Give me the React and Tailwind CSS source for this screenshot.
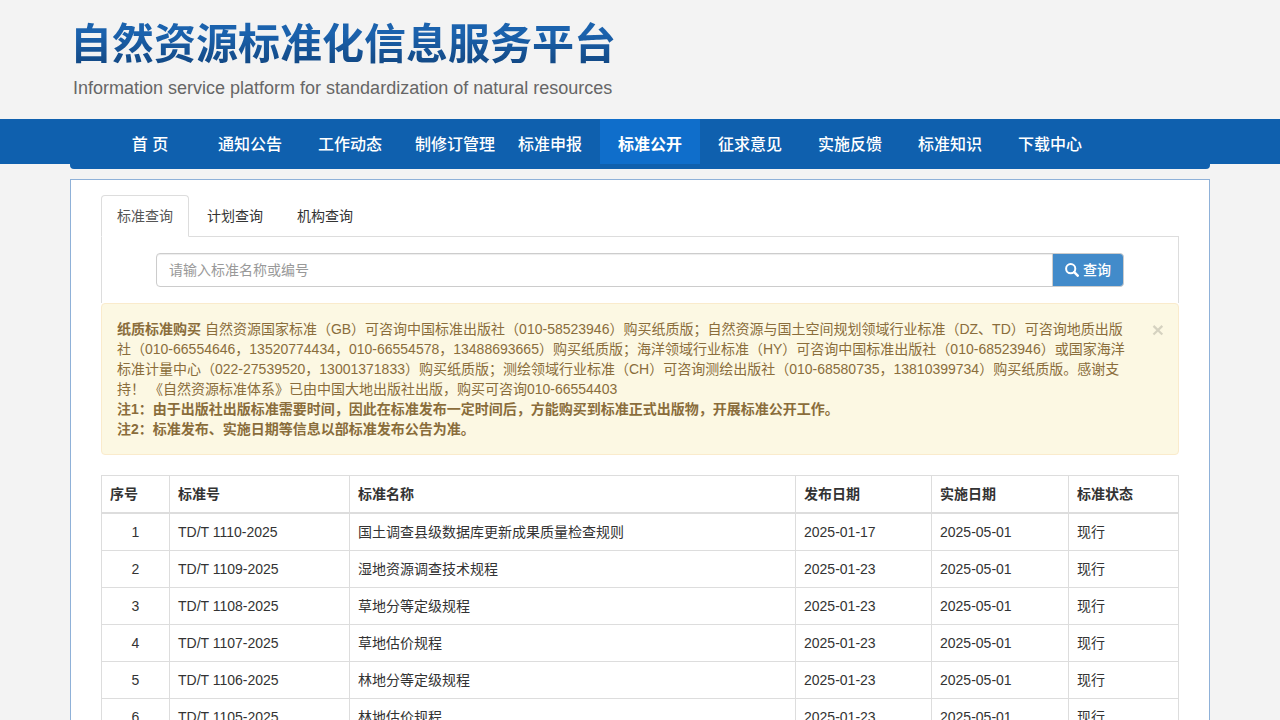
import React, { useState } from 'react';
import clsx from 'clsx';

const navItems = [
  '首 页',
  '通知公告',
  '工作动态',
  '制修订管理',
  '标准申报',
  '标准公开',
  '征求意见',
  '实施反馈',
  '标准知识',
  '下载中心',
];

const tabs = ['标准查询', '计划查询', '机构查询'];

const standards = [
  { code: 'TD/T 1110-2025', name: '国土调查县级数据库更新成果质量检查规则', published: '2025-01-17', effective: '2025-05-01', status: '现行' },
  { code: 'TD/T 1109-2025', name: '湿地资源调查技术规程', published: '2025-01-23', effective: '2025-05-01', status: '现行' },
  { code: 'TD/T 1108-2025', name: '草地分等定级规程', published: '2025-01-23', effective: '2025-05-01', status: '现行' },
  { code: 'TD/T 1107-2025', name: '草地估价规程', published: '2025-01-23', effective: '2025-05-01', status: '现行' },
  { code: 'TD/T 1106-2025', name: '林地分等定级规程', published: '2025-01-23', effective: '2025-05-01', status: '现行' },
  { code: 'TD/T 1105-2025', name: '林地估价规程', published: '2025-01-23', effective: '2025-05-01', status: '现行' },
];

const SearchIcon = () => (
  <svg className="h-3.5 w-3.5" viewBox="0 0 14 14" fill="none" stroke="currentColor" aria-hidden="true">
    <circle cx="5.7" cy="5.7" r="4.6" strokeWidth="2" />
    <path d="M9.2 9.2l3.5 3.5" strokeWidth="2.5" strokeLinecap="round" />
  </svg>
);

const Header = () => (
  <header className="mx-auto h-[119px] max-w-[1140px] pt-4">
    <h1 className="w-fit bg-gradient-to-b from-[#1b62ad] from-30% to-[#134a87] to-80% bg-clip-text text-[42px] leading-[58px] font-bold text-transparent">
      自然资源标准化信息服务平台
    </h1>
    <p className="pl-[3px] text-lg leading-7 text-[#666666]">
      Information service platform for standardization of natural resources
    </p>
  </header>
);

const Nav = () => (
  <nav className="h-[45px] bg-[#0f60ae]">
    <ul className="mx-auto flex h-[50px] max-w-[1140px] rounded-b bg-[#0f60ae] px-[30px]">
      {navItems.map((item) => (
        <li key={item} className="w-[100px]">
          <a
            href="#"
            className={clsx(
              'block h-[45px] px-[15px] text-center text-base leading-[52px] whitespace-nowrap text-white',
              item === '标准公开' ? 'bg-[#0f6ecb] font-bold' : 'font-medium'
            )}
          >
            {item}
          </a>
        </li>
      ))}
    </ul>
  </nav>
);

const Notice = ({ onClose }) => (
  <div className="rounded border border-[#faebcc] bg-[#fcf8e3] p-[15px] pr-[35px] text-[#8a6d3b]">
    {/* floats past the first line, so the first two lines wrap short of it */}
    <button
      type="button"
      aria-label="关闭"
      onClick={onClose}
      className="relative -right-[21px] float-right text-[21px] leading-[21px] font-bold text-black opacity-15"
    >
      ×
    </button>
    <p>
      <strong>纸质标准购买</strong>{' '}
      自然资源国家标准（GB）可咨询中国标准出版社（010-58523946）购买纸质版；自然资源与国土空间规划领域行业标准（DZ、TD）可咨询地质出版社（010-66554646，13520774434，010-66554578，13488693665）购买纸质版；海洋领域行业标准（HY）可咨询中国标准出版社（010-68523946）或国家海洋标准计量中心（022-27539520，13001371833）购买纸质版；测绘领域行业标准（CH）可咨询测绘出版社（010-68580735，13810399734）购买纸质版。感谢支持！ 《自然资源标准体系》已由中国大地出版社出版，购买可咨询010-66554403
    </p>
    <p className="font-bold">注1：由于出版社出版标准需要时间，因此在标准发布一定时间后，方能购买到标准正式出版物，开展标准公开工作。</p>
    <p className="font-bold">注2：标准发布、实施日期等信息以部标准发布公告为准。</p>
  </div>
);

const App = () => {
  const [activeTab, setActiveTab] = useState('标准查询');
  const [keyword, setKeyword] = useState('');
  const [showNotice, setShowNotice] = useState(true);

  return (
    <div
      lang="zh-CN"
      className="min-h-screen bg-[#f3f3f3] font-['Liberation_Sans','Noto_Sans_CJK_SC',sans-serif] text-sm leading-5 text-[#333333]"
    >
      <Header />
      <Nav />

      <main className="mx-auto mt-[15px] max-w-[1140px] border border-[#8fb1d8] bg-white px-[30px] pt-[15px] pb-5">
        <div className="flex gap-0.5 border-b border-[#dddddd]" role="tablist">
          {tabs.map((tab) => (
            <button
              key={tab}
              type="button"
              role="tab"
              aria-selected={activeTab === tab}
              onClick={() => setActiveTab(tab)}
              className={clsx(
                '-mb-px rounded-t border px-[15px] py-2.5',
                activeTab === tab ? 'border-[#dddddd] border-b-white bg-white text-[#555555]' : 'border-transparent'
              )}
            >
              {tab}
            </button>
          ))}
        </div>

        <form
          className="flex border-x border-[#dddddd] px-[54px] py-4"
          onSubmit={(e) => e.preventDefault()}
        >
          <input
            type="text"
            aria-label="标准名称或编号"
            value={keyword}
            onChange={(e) => setKeyword(e.target.value)}
            placeholder="请输入标准名称或编号"
            className="h-[34px] min-w-0 flex-1 rounded-l border border-[#cccccc] px-3 shadow-[inset_0_1px_1px_rgba(0,0,0,0.075)] placeholder:text-[#999999]"
          />
          <button
            type="submit"
            className="-ml-px flex h-[34px] items-center gap-1 rounded-r border border-[#cccccc] bg-[#428bca] px-3 font-medium text-white"
          >
            <SearchIcon />
            查询
          </button>
        </form>

        {showNotice && <Notice onClose={() => setShowNotice(false)} />}

        <table className="mt-5 w-full table-fixed border-collapse">
          <thead>
            <tr className="text-left [&>th]:border [&>th]:border-b-2 [&>th]:border-[#dddddd] [&>th]:p-2">
              <th className="w-[68px]">序号</th>
              <th className="w-[180px]">标准号</th>
              <th>标准名称</th>
              <th className="w-[136px]">发布日期</th>
              <th className="w-[137px]">实施日期</th>
              <th className="w-[110px]">标准状态</th>
            </tr>
          </thead>
          <tbody>
            {standards.map((row, i) => (
              <tr key={row.code} className="[&>td]:border [&>td]:border-[#dddddd] [&>td]:p-2">
                <td className="text-center">{i + 1}</td>
                <td>{row.code}</td>
                <td>{row.name}</td>
                <td>{row.published}</td>
                <td>{row.effective}</td>
                <td>{row.status}</td>
              </tr>
            ))}
          </tbody>
        </table>
      </main>
    </div>
  );
};

export default App;
